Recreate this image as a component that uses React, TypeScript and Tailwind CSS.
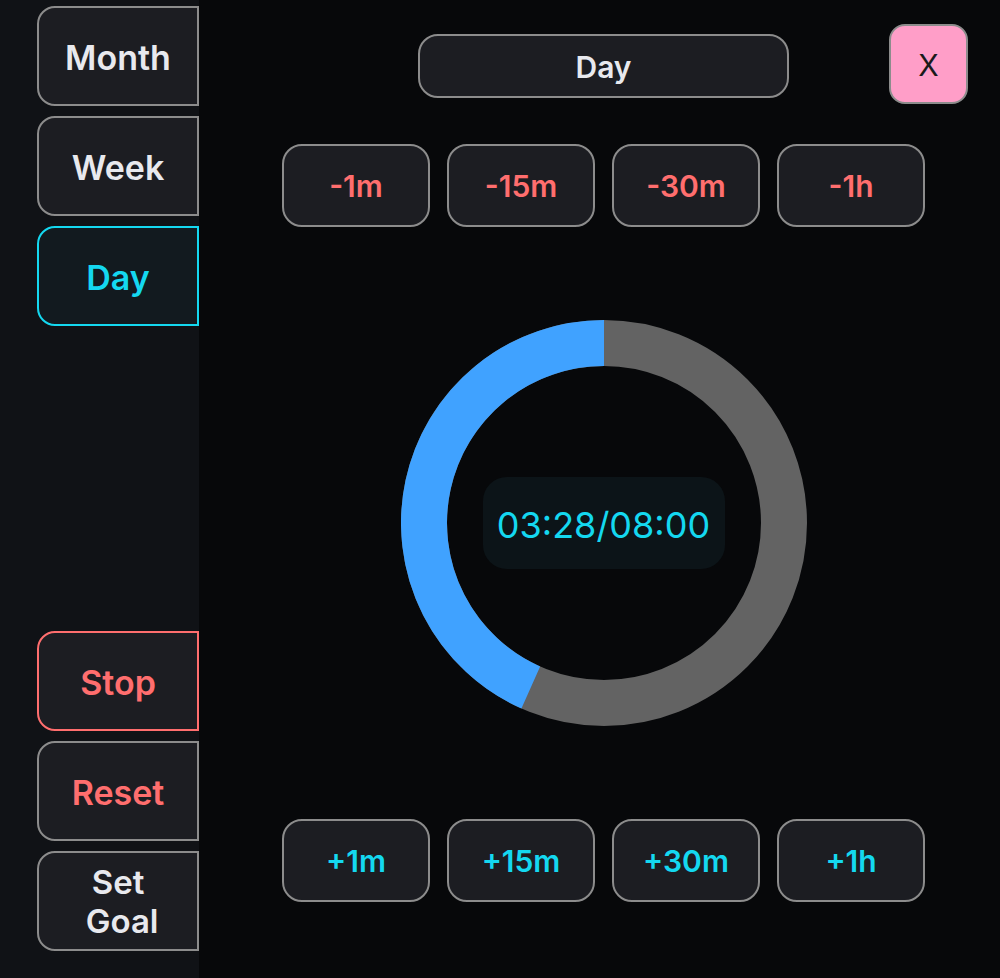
import React from 'react';

const font = { fontFamily: 'Inter, "Noto Sans", sans-serif' };

function SideButton({
  label,
  tone = 'default',
  multi,
}: {
  label: React.ReactNode;
  tone?: 'default' | 'active' | 'danger' | 'dangerText';
  multi?: boolean;
}) {
  const styles = {
    default: 'border-[#8c8c8c] bg-[#1c1d22] text-[#e8e9ee]',
    active: 'border-[#14d8f0] bg-[#121a1f] text-[#14d8f0]',
    danger: 'border-[#ff6e6e] bg-[#1c1d22] text-[#ff6e6e]',
    dangerText: 'border-[#8c8c8c] bg-[#1c1d22] text-[#ff6e6e]',
  }[tone];
  return (
    <button
      className={`flex h-[100px] w-[162px] items-center justify-center rounded-l-[18px] border-2 text-center font-semibold ${
        multi ? 'pt-[2px] text-[33px] leading-[39px]' : 'pt-[3px] text-[34px] leading-[40px]'
      } ${styles}`}
    >
      {label}
    </button>
  );
}

function StepButton({ label, plus }: { label: string; plus?: boolean }) {
  return (
    <button
      className={`flex h-[83px] w-[148px] shrink-0 items-center justify-center rounded-[20px] border-2 border-[#8c8c8c] bg-[#1c1d22] pt-[2px] text-[30px] font-semibold ${
        plus ? 'text-[#14d8f0]' : 'text-[#ff6e6e]'
      }`}
    >
      {label}
    </button>
  );
}

export default function App() {
  const progress = 208 / 480;
  const r = 180;
  const c = 203;
  const ang = progress * Math.PI * 2;
  const ex = c - r * Math.sin(ang);
  const ey = c - r * Math.cos(ang);

  return (
    <div className="flex h-[978px] w-[1000px] overflow-hidden bg-[#07080a]" style={font}>
      {/* Sidebar */}
      <div className="flex w-[199px] shrink-0 flex-col justify-between bg-[#101216] pb-[27px] pl-[37px] pt-[6px]">
        <div className="flex flex-col gap-[10px]">
          <SideButton label="Month" />
          <SideButton label="Week" />
          <SideButton label="Day" tone="active" />
        </div>
        <div className="flex flex-col gap-[10px]">
          <SideButton label="Stop" tone="danger" />
          <SideButton label="Reset" tone="dangerText" />
          <SideButton
            multi
            label={
              <span>
                Set
                <br />
                &nbsp;Goal
              </span>
            }
          />
        </div>
      </div>

      {/* Main */}
      <div className="relative flex flex-1 flex-col items-center pl-[8px] pt-[34px]">
        <button className="absolute right-[32px] top-[24px] flex h-[80px] w-[79px] items-center justify-center rounded-[16px] border-2 border-[#8c8c8c] bg-[#ff9ec8] pt-[2px] text-[30px] text-[#1a1a1a]">
          X
        </button>

        <div className="flex h-[64px] w-[371px] items-center justify-center rounded-[20px] border-2 border-[#8c8c8c] bg-[#1c1d22] pt-[2px] text-[30px] font-semibold text-[#e8e9ee]">
          Day
        </div>

        <div className="mt-[46px] flex gap-[17px]">
          <StepButton label="-1m" />
          <StepButton label="-15m" />
          <StepButton label="-30m" />
          <StepButton label="-1h" />
        </div>

        <div className="relative mt-[93px] flex h-[406px] w-[406px] items-center justify-center">
          <svg width="406" height="406" viewBox="0 0 406 406" className="absolute inset-0">
            <circle cx={c} cy={c} r={r} fill="none" stroke="#636363" strokeWidth="46" />
            <path
              d={`M ${c} ${c - r} A ${r} ${r} 0 0 0 ${ex} ${ey}`}
              fill="none"
              stroke="#40a2ff"
              strokeWidth="46"
            />
          </svg>
          <div className="relative flex h-[92px] w-[242px] items-center justify-center rounded-[24px] bg-[#0c1418] pt-[3px] text-[36px] text-[#14d8f0]">
            03:28/08:00
          </div>
        </div>

        <div className="mt-[93px] flex gap-[17px]">
          <StepButton label="+1m" plus />
          <StepButton label="+15m" plus />
          <StepButton label="+30m" plus />
          <StepButton label="+1h" plus />
        </div>
      </div>
    </div>
  );
}
